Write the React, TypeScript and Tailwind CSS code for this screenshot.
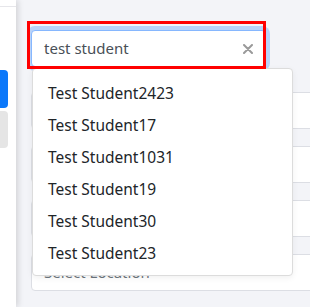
import React from "react";

const items = [
  "Test Student2423",
  "Test Student17",
  "Test Student1031",
  "Test Student19",
  "Test Student30",
  "Test Student23",
];

export default function App() {
  return (
    <div className="w-[310px] h-[307px] flex overflow-hidden bg-[#f3f4f8] font-['Noto_Sans',sans-serif]">
      <div className="w-[16px] shrink-0 bg-white relative z-10 shadow-[2px_0_6px_rgba(0,0,0,0.14)] flex flex-col">
        <div className="h-[7px] border-b border-[#e6e6ea]" />
        <div className="mt-[63px] h-[38px] w-[8px] bg-[#0b78fa] rounded-r-[4px]" />
        <div className="mt-[3px] h-[37px] w-[8px] bg-[#e5e5e5] rounded-r-[4px]" />
      </div>
      <div className="flex-1 flex flex-col pl-[15px] pt-[30px]">
        <div className="relative w-[235px] h-[37px] z-20">
          <div className="h-full flex items-center justify-between pl-[12px] pr-[12px] bg-white border border-[#86b7fe] rounded-[4px] shadow-[0_0_0_4px_rgba(13,110,253,0.25)]">
            <span className="text-[15px] text-[#495057]">test student</span>
            <svg width="10" height="10" viewBox="0 0 10 10">
              <path d="M1 1 L9 9 M9 1 L1 9" stroke="#9a9a9a" strokeWidth="2" strokeLinecap="round" />
            </svg>
          </div>
          <div className="absolute left-[-4px] top-[-9px] w-[239px] h-[48px] border-[3px] border-[#ff0000] z-30 pointer-events-none" />
          <div className="absolute left-[1px] top-[38px] w-[261px] h-[208px] bg-white border border-[#dcdcdc] rounded-[4px] shadow-[0_2px_6px_rgba(0,0,0,0.06)] pt-[9px] z-20">
            {items.map((t) => (
              <div key={t} className="h-[32px] flex items-center pl-[15px] text-[15.5px] text-[#212529]">
                {t}
              </div>
            ))}
          </div>
        </div>
        <div className="mt-[25px] flex flex-col gap-[17px]">
          <div className="h-[37px] w-[300px] bg-white border border-[#dcdee4] rounded-[4px]" />
          <div className="h-[37px] w-[300px] bg-white border border-[#dcdee4] rounded-[4px]" />
          <div className="h-[37px] w-[300px] bg-white border border-[#dcdee4] rounded-[4px]" />
          <div className="h-[37px] w-[300px] bg-white border border-[#dcdee4] rounded-[4px] flex items-center pl-[12px]">
            <span className="text-[15px] text-[#6c757d]">Select Location</span>
          </div>
        </div>
      </div>
    </div>
  );
}
